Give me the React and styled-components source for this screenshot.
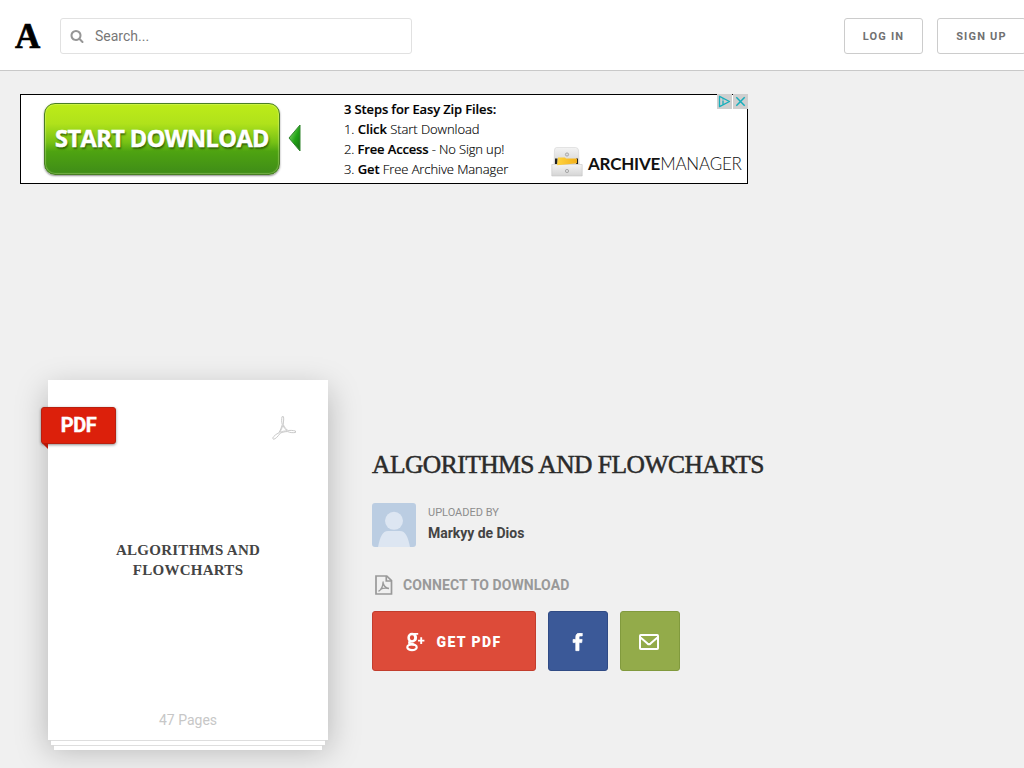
import React from 'react';
import styled, { createGlobalStyle } from 'styled-components';

const GlobalStyle = createGlobalStyle`
  * { box-sizing: border-box; }
  body {
    margin: 0;
    background: #f0f0f0;
    font-family: Roboto, "Liberation Sans", sans-serif;
    overflow: hidden;
  }
  h1, h2, p { margin: 0; }
  svg { display: block; flex: none; }
`;

const Page = styled.div`
  height: 768px;
  overflow: hidden;
`;

const Header = styled.header`
  display: flex;
  align-items: flex-start;
  height: 71px;
  padding: 18px 0 0 15px;
  background: #fff;
  border-bottom: 1px solid #c9c9c9;
`;

const Logo = styled.div`
  width: 45px;
  font: bold 35px/37px "Liberation Serif", serif;
  color: #000;
  -webkit-text-stroke: 0.7px #000;
`;

const SearchBox = styled.div`
  display: flex;
  align-items: center;
  gap: 11px;
  width: 352px;
  height: 36px;
  padding: 0 0 1px 9px;
  border: 1px solid #e1e1e1;
  border-radius: 3px;
  font-size: 14px;
  color: #777;
`;

const HeaderButtons = styled.div`
  display: flex;
  gap: 14px;
  margin-left: auto;
  margin-right: -2px;
`;

const HeaderButton = styled.button`
  width: ${(p) => p.$width}px;
  height: 36px;
  padding: 1px 0 0;
  background: #fff;
  border: 1px solid #ccc;
  border-radius: 3px;
  font: bold 11px/33px Roboto, sans-serif;
  letter-spacing: 1.2px;
  color: #717171;
`;

const Ad = styled.section`
  display: flex;
  position: relative;
  width: 728px;
  height: 90px;
  margin: 23px 0 0 20px;
  padding: 8px 0 0 23px;
  background: #fff;
  border: 1px solid #000;
`;

const DownloadButton = styled.div`
  width: 236px;
  height: 72px;
  border: 1px solid #497e24;
  border-radius: 11px;
  background: linear-gradient(#bdec18 0%, #b0e21b 28%, #76c115 55%, #4ea311 68%, #3f8c18 100%);
  box-shadow: inset 0 0 1px 1px rgba(240, 255, 180, 0.3), 0 1px 2px rgba(0, 0, 0, 0.45);
  font: 700 23.5px/68px "Open Sans", sans-serif;
  letter-spacing: -0.55px;
  color: #fff;
  text-align: center;
  white-space: nowrap;
  -webkit-text-stroke: 0.5px #fff;
  text-shadow: 1px 2px 2px rgba(30, 70, 0, 0.75);
`;

const ArrowHolder = styled.div`
  padding: 21px 0 0 8px;
  width: 64px;
`;

const Steps = styled.div`
  width: 207px;
  margin-top: -4px;
  font: 300 13px/20px "Open Sans", sans-serif;
  color: #000;
  white-space: nowrap;
  -webkit-text-stroke: 0.15px #000;
`;

const StepLine = styled.div`
  letter-spacing: ${(p) => p.$spacing || 0}px;
  b { font-weight: 600; }
`;

const Brand = styled.div`
  display: flex;
  gap: 5px;
  margin-top: 43px;
  height: 32px;
  font: 300 17px/36px Lato, sans-serif;
  letter-spacing: -0.2px;
  color: #111;
  white-space: nowrap;
  b { font-weight: 700; }
`;

const AdChoices = styled.div`
  position: absolute;
  top: -1px;
  right: -1px;
  display: flex;
  gap: 1px;
`;

const Content = styled.main`
  display: flex;
  gap: 44px;
  padding: 196px 0 0 48px;
`;

const Stack = styled.div`
  display: flex;
  flex-direction: column;
  align-items: center;
  width: 280px;
`;

const Cover = styled.article`
  position: relative;
  z-index: 1;
  display: flex;
  flex-direction: column;
  align-items: center;
  width: 280px;
  height: 360px;
  background: #fff;
  box-shadow: 0 10px 30px rgba(0, 0, 0, 0.25);
`;

const Sheet = styled.div`
  position: relative;
  z-index: 2;
  width: ${(p) => p.$width}px;
  height: 5px;
  background: #fff;
  border-top: 1px solid #dedede;
  box-shadow: ${(p) => (p.$last ? '0 12px 18px -5px rgba(0, 0, 0, 0.14)' : 'none')};
`;

const Ribbon = styled.div`
  position: absolute;
  left: -7px;
  top: 27px;
  width: 75px;
  height: 37px;
  border-radius: 3px;
  border: 1px solid #b9200f;
  background: #dc200b;
  box-shadow: 0 1px 3px rgba(0, 0, 0, 0.45);
  font: bold 20px/34px Roboto, sans-serif;
  letter-spacing: -0.5px;
  text-align: center;
  color: #fff;
  -webkit-text-stroke: 0.4px #fff;
  &::after {
    content: "";
    position: absolute;
    left: 0;
    top: 35px;
    border-top: 6px solid #b91808;
    border-left: 6px solid transparent;
  }
`;

const CoverMark = styled.div`
  align-self: flex-end;
  margin: 36px 32px 0 0;
  height: 124px;
`;

const CoverTitle = styled.h2`
  width: 200px;
  font: bold 15px/20px "Liberation Serif", serif;
  color: #444;
  text-align: center;
  letter-spacing: 0.27px;
`;

const PageCount = styled.p`
  margin-top: auto;
  margin-bottom: 11px;
  font-size: 14px;
  line-height: 18px;
  color: #c7c7c7;
`;

const Details = styled.section`
  padding-top: 67px;
`;

const Title = styled.h1`
  font: 400 25.5px/36px "Liberation Serif", serif;
  letter-spacing: -0.53px;
  color: #2b2b2b;
  white-space: nowrap;
  -webkit-text-stroke: 0.5px #2b2b2b;
`;

const Author = styled.div`
  display: flex;
  gap: 12px;
  margin-top: 20px;
`;

const AuthorText = styled.div`
  padding-top: 2px;
`;

const Label = styled.p`
  font-size: 11px;
  line-height: 16px;
  color: #8d8d8d;
`;

const Name = styled.p`
  margin-top: 2px;
  font-size: 14px;
  font-weight: 700;
  line-height: 20px;
  letter-spacing: -0.03px;
  color: #444;
`;

const Connect = styled.div`
  display: flex;
  align-items: center;
  gap: 10px;
  height: 22px;
  margin: 27px 0 15px 3px;
  font-size: 14px;
  font-weight: 700;
  letter-spacing: 0.1px;
  color: #999;
`;

const Actions = styled.div`
  display: flex;
  gap: 12px;
`;

const ActionButton = styled.button`
  display: flex;
  align-items: center;
  justify-content: center;
  gap: 11px;
  width: ${(p) => p.$width || 60}px;
  height: 60px;
  padding: 2px ${(p) => (p.$width ? 0 : 2)}px 0 0;
  border: 1px solid ${(p) => p.$edge};
  border-radius: 3px;
  background: ${(p) => p.$color};
  font: 900 14px/20px Roboto, sans-serif;
  letter-spacing: 1.4px;
  color: #fff;
`;

const SearchIcon = () => (
  <svg width="14" height="14" viewBox="0 0 1792 1792" fill="#969696">
    <path d="M1216 832q0-185-131.5-316.5t-316.5-131.5-316.5 131.5-131.5 316.5 131.5 316.5 316.5 131.5 316.5-131.5 131.5-316.5zm512 832q0 52-38 90t-90 38q-54 0-90-38l-343-342q-179 124-399 124-143 0-273.5-55.5t-225-150-150-225-55.5-273.5 55.5-273.5 150-225 225-150 273.5-55.5 273.5 55.5 225 150 150 225 55.5 273.5q0 220-124 399l343 343q37 37 37 90z" />
  </svg>
);

const ArrowIcon = () => (
  <svg width="13" height="28" viewBox="0 0 13 28">
    <defs>
      <linearGradient id="arrow" x1="0" x2="1" y1="0" y2="1">
        <stop offset="0.1" stopColor="#8bdc70" />
        <stop offset="0.55" stopColor="#20a315" />
        <stop offset="1" stopColor="#176c12" />
      </linearGradient>
    </defs>
    <path d="M12 1v26L1 14z" fill="url(#arrow)" stroke="#33852f" strokeWidth="1" strokeLinejoin="round" />
  </svg>
);

const CabinetIcon = () => (
  <svg width="32" height="31" viewBox="0 0 32 31">
    <defs>
      <linearGradient id="metal" x1="0" x2="0" y1="0" y2="1">
        <stop offset="0" stopColor="#f3f3f3" />
        <stop offset="1" stopColor="#d4d4d4" />
      </linearGradient>
      <linearGradient id="folder" x1="0" x2="1" y1="0" y2="0">
        <stop offset="0" stopColor="#ffd440" />
        <stop offset="1" stopColor="#f2b01c" />
      </linearGradient>
    </defs>
    <path d="M5.500 1.500h19q2.500 0 3 2.500l.7 14H3L3.500 4Q3.700 1.500 5.500 1.500z" fill="url(#metal)" stroke="#d4d4d4" strokeWidth=".6" />
    <path d="M4 12.500h2.500V18H4zM25 12.500h2V18h-2z" fill="#222" />
    <path d="M.8 18.500h30.400V30H.8z" fill="url(#metal)" stroke="#c6c6c6" strokeWidth=".6" />
    <path d="M7 11.500h7l1 1h11v4.700q-9 .8-20 2z" fill="url(#folder)" />
    <circle cx="16" cy="8.500" r="1.600" fill="#ddd" stroke="#999" strokeWidth=".8" />
    <circle cx="16" cy="25" r="1.600" fill="#ddd" stroke="#999" strokeWidth=".8" />
  </svg>
);

const AdInfoIcon = () => (
  <svg width="15" height="15" viewBox="0 0 15 15">
    <path d="M0 0h15v15H0z" fill="#cfcfcf" />
    <path d="M2.500 2.300v10.400l10-5.200z" fill="none" stroke="#16aebc" strokeWidth="1.300" strokeLinejoin="round" />
    <path d="M6 6.500v4M6 4.500v1" stroke="#16aebc" strokeWidth="1.300" />
  </svg>
);

const AdCloseIcon = () => (
  <svg width="15" height="15" viewBox="0 0 15 15">
    <path d="M0 0h15v15H0z" fill="#cfcfcf" />
    <path d="M3.300 3.300l8.400 8.400m0-8.400l-8.400 8.400" stroke="#16aebc" strokeWidth="1.500" />
  </svg>
);

const AcrobatIcon = () => (
  <svg width="24" height="24" viewBox="0 0 24 24" fill="none" stroke="#c9c9c9" strokeLinejoin="round">
    <path d="M10 .7h1.500c.6 3-.4 6-.2 8 1.400 3.200 3.200 5 4.900 5.900 2.200-.4 4.800-.2 7.300.4v1.500c-3.200.4-5.700.1-7.700-.9-2.600-.1-5.100.5-7.500 1.500C5.900 20.500 3.500 23 1.500 23.300L.7 22c1.200-2.100 3.500-4 6.200-5.100 1.300-2.400 2.700-5.200 3.400-8.200C9.400 5.700 9.600 3 10 .7z" strokeWidth="1" />
    <path d="M10.900 9.500c-.8 2.600-1.900 4.700-3 6.700 2.300-.8 4.700-1.400 7-1.500-1.700-1.300-3.100-3-4-5.200z" strokeWidth=".8" />
  </svg>
);

const Avatar = () => (
  <svg width="44" height="44" viewBox="0 0 44 44">
    <rect width="44" height="44" rx="3" fill="#bbcde2" />
    <circle cx="22" cy="17.800" r="9" fill="#dde6f2" />
    <path d="M6 44c2-10 4.500-16 10-16h12c5.500 0 8 6 10 16z" fill="#dde6f2" />
  </svg>
);

const FileIcon = () => (
  <svg width="18" height="20" viewBox="0 0 18 20" fill="none" stroke="#999" strokeWidth="1.700">
    <path d="M1 1h10.800L16.500 5.700V19H1z" />
    <path d="M11.300 1v5h5.200" />
    <path d="M3.500 16.300c2.300-1.200 4.400-4.700 4.700-9.800M8.300 8.500c.6 2.600 2.300 4.500 5.700 5M5.300 14.300c2.300-1.200 5-1.600 8.700-.8" strokeWidth="1.400" strokeLinejoin="round" />
  </svg>
);

const GooglePlusIcon = () => (
  <svg width="19" height="20" viewBox="0 0 19 20" fill="none" stroke="#fff">
    <ellipse cx="6" cy="5.800" rx="3.400" ry="3.700" strokeWidth="2.500" />
    <path d="M6 1.800h6.200M9 2.500c1.600 1.600 1.600 4.500 0 6.200" strokeWidth="1.700" />
    <path d="M4.400 9c-2 1.600-1.400 2.500.4 2.900l3.200.8" strokeWidth="2.300" />
    <ellipse cx="6" cy="15.200" rx="4.700" ry="2.900" strokeWidth="2.200" />
    <path d="M15.200 5.300v6.600M12 8.600h6.400" strokeWidth="1.900" />
  </svg>
);

const FacebookIcon = () => (
  <svg width="19" height="19" viewBox="0 0 1792 1792" fill="#fff" stroke="#fff" strokeWidth="70">
    <path d="M1343 12v264h-157q-86 0-116 36t-30 108v189h293l-39 296h-254v759h-306v-759h-255v-296h255v-218q0-186 104-288.500t277-102.500q147 0 228 12z" />
  </svg>
);

const MailIcon = () => (
  <svg width="20" height="16" viewBox="0 0 20 16" fill="none" stroke="#fff" strokeWidth="2" strokeLinejoin="round">
    <rect x="1" y="1" width="18" height="14" rx=".8" />
    <path d="M1.500 3.500L8.500 9.600q1.500 1.200 3 0l7-6.100" />
  </svg>
);

export default function App() {
  return (
    <Page>
      <GlobalStyle />
      <Header>
        <Logo>A</Logo>
        <SearchBox><SearchIcon />Search...</SearchBox>
        <HeaderButtons>
          <HeaderButton $width={79}>LOG IN</HeaderButton>
          <HeaderButton $width={89}>SIGN UP</HeaderButton>
        </HeaderButtons>
      </Header>
      <Ad>
        <DownloadButton>START DOWNLOAD</DownloadButton>
        <ArrowHolder><ArrowIcon /></ArrowHolder>
        <Steps>
          <StepLine $spacing={-0.13}><b>3 Steps for Easy Zip Files:</b></StepLine>
          <StepLine $spacing={-0.06}>1. <b>Click</b> Start Download</StepLine>
          <StepLine $spacing={-0.14}>2. <b>Free Access</b> - No Sign up!</StepLine>
          <StepLine $spacing={-0.08}>3. <b>Get</b> Free Archive Manager</StepLine>
        </Steps>
        <Brand><CabinetIcon /><span><b>ARCHIVE</b>MANAGER</span></Brand>
        <AdChoices><AdInfoIcon /><AdCloseIcon /></AdChoices>
      </Ad>
      <Content>
        <Stack>
          <Cover>
            <Ribbon>PDF</Ribbon>
            <CoverMark><AcrobatIcon /></CoverMark>
            <CoverTitle>ALGORITHMS AND FLOWCHARTS</CoverTitle>
            <PageCount>47 Pages</PageCount>
          </Cover>
          <Sheet $width={274} />
          <Sheet $width={268} $last />
        </Stack>
        <Details>
          <Title>ALGORITHMS AND FLOWCHARTS</Title>
          <Author>
            <Avatar />
            <AuthorText>
              <Label>UPLOADED BY</Label>
              <Name>Markyy de Dios</Name>
            </AuthorText>
          </Author>
          <Connect><FileIcon />CONNECT TO DOWNLOAD</Connect>
          <Actions>
            <ActionButton $width={164} $color="#dd4b39" $edge="#c23d2d"><GooglePlusIcon />GET PDF</ActionButton>
            <ActionButton $color="#3b5998" $edge="#304b85"><FacebookIcon /></ActionButton>
            <ActionButton $color="#93ab4a" $edge="#819a3d"><MailIcon /></ActionButton>
          </Actions>
        </Details>
      </Content>
    </Page>
  );
}
